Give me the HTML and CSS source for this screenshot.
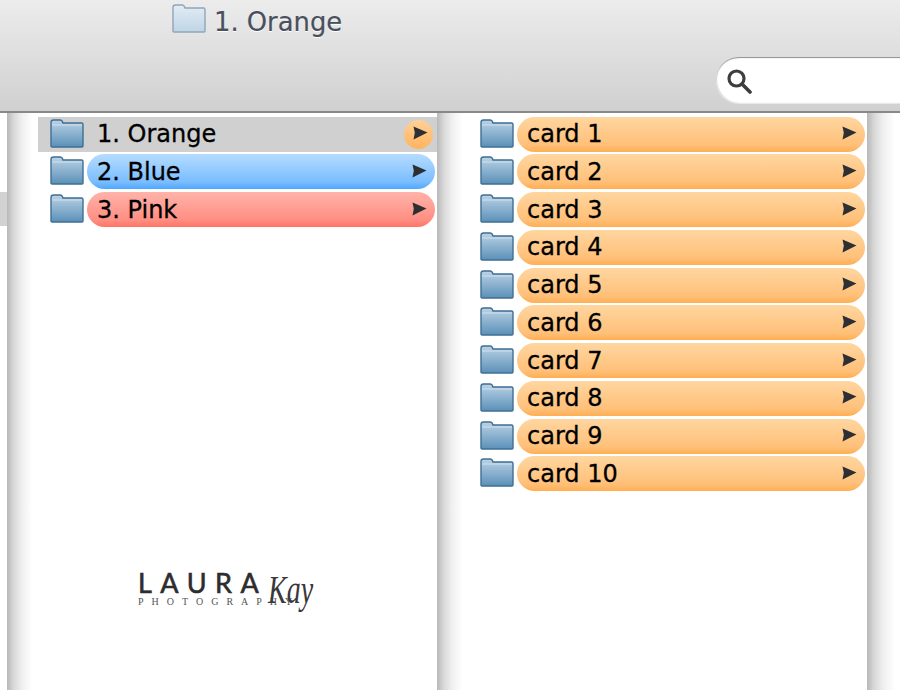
FILE: index.html
```html
<!DOCTYPE html>
<html lang="en">
<head>
    <meta charset="UTF-8">
    <meta name="viewport" content="width=device-width, initial-scale=1.0">
    <title>1. Orange</title>
    <link rel="stylesheet" href="styles.css">
</head>
<body>
    <svg class="defs" width="0" height="0">
        <defs>
            <linearGradient id="folderFill" x1="0" y1="0" x2="0" y2="1">
                <stop offset="0" stop-color="#bcd3e6"/>
                <stop offset="1" stop-color="#5b90b8"/>
            </linearGradient>
            <linearGradient id="folderPale" x1="0" y1="0" x2="0" y2="1">
                <stop offset="0" stop-color="#e2ecf4"/>
                <stop offset="1" stop-color="#bfd4e6"/>
            </linearGradient>
            <symbol id="folder" viewBox="0 0 34 30">
                <path d="M1 28V4.500C1 3 2 2 3.500 2H10C11.500 2 12.500 3 13 5H31.500C32.500 5 33 5.500 33 6.500V28C33 28.700 32.500 29 32 29H2C1.500 29 1 28.700 1 28Z" fill="url(#folderFill)" stroke="#3f6f93" stroke-width="1.400"/>
                <path d="M2 7H32" stroke="#e3eef6" stroke-width="1" opacity="0.700"/>
            </symbol>
            <symbol id="arrow" viewBox="0 0 15 14">
                <path d="M0.500 0.500L14.500 6.500L0.500 13.500L1.800 6.800Z" fill="#2d2f33"/>
            </symbol>
        </defs>
    </svg>

    <header class="toolbar">
        <div class="path-title">
            <svg class="title-folder" viewBox="0 0 34 30">
                <path d="M1 28V4.500C1 3 2 2 3.500 2H10C11.500 2 12.500 3 13 5H31.500C32.500 5 33 5.500 33 6.500V28C33 28.700 32.500 29 32 29H2C1.500 29 1 28.700 1 28Z" fill="url(#folderPale)" stroke="#8fa6b8" stroke-width="1.400"/>
            </svg>
            <span>1. Orange</span>
        </div>
        <div class="search">
            <svg class="search-icon" viewBox="0 0 26 26">
                <circle cx="10.500" cy="10.500" r="7.500" fill="none" stroke="#3e3e3e" stroke-width="3.200"/>
                <path d="M16 16L24 24" stroke="#3e3e3e" stroke-width="3.600" stroke-linecap="round"/>
            </svg>
        </div>
    </header>

    <main class="browser">
        <div class="gutter gutter-first">
            <div class="prev-column"><div class="prev-selection"></div></div>
            <div class="shade"></div>
        </div>

        <section class="column">
            <div class="row row-selected">
                <svg class="folder"><use href="#folder"/></svg>
                <div class="label">
                    <span>1. Orange</span>
                    <div class="dot"><svg class="arrow"><use href="#arrow"/></svg></div>
                </div>
            </div>
            <div class="row">
                <svg class="folder"><use href="#folder"/></svg>
                <div class="label pill blue"><span>2. Blue</span><svg class="arrow"><use href="#arrow"/></svg></div>
            </div>
            <div class="row">
                <svg class="folder"><use href="#folder"/></svg>
                <div class="label pill pink"><span>3. Pink</span><svg class="arrow"><use href="#arrow"/></svg></div>
            </div>
            <div class="logo">
                <div class="logo-name">LAURA</div>
                <div class="logo-sub">PHOTOGRAPHY</div>
                <div class="logo-script">Kay</div>
            </div>
        </section>

        <div class="gutter"><div class="shade"></div></div>

        <section class="column">
            <div class="row"><svg class="folder"><use href="#folder"/></svg><div class="label pill orange"><span>card 1</span><svg class="arrow"><use href="#arrow"/></svg></div></div>
            <div class="row"><svg class="folder"><use href="#folder"/></svg><div class="label pill orange"><span>card 2</span><svg class="arrow"><use href="#arrow"/></svg></div></div>
            <div class="row"><svg class="folder"><use href="#folder"/></svg><div class="label pill orange"><span>card 3</span><svg class="arrow"><use href="#arrow"/></svg></div></div>
            <div class="row"><svg class="folder"><use href="#folder"/></svg><div class="label pill orange"><span>card 4</span><svg class="arrow"><use href="#arrow"/></svg></div></div>
            <div class="row"><svg class="folder"><use href="#folder"/></svg><div class="label pill orange"><span>card 5</span><svg class="arrow"><use href="#arrow"/></svg></div></div>
            <div class="row"><svg class="folder"><use href="#folder"/></svg><div class="label pill orange"><span>card 6</span><svg class="arrow"><use href="#arrow"/></svg></div></div>
            <div class="row"><svg class="folder"><use href="#folder"/></svg><div class="label pill orange"><span>card 7</span><svg class="arrow"><use href="#arrow"/></svg></div></div>
            <div class="row"><svg class="folder"><use href="#folder"/></svg><div class="label pill orange"><span>card 8</span><svg class="arrow"><use href="#arrow"/></svg></div></div>
            <div class="row"><svg class="folder"><use href="#folder"/></svg><div class="label pill orange"><span>card 9</span><svg class="arrow"><use href="#arrow"/></svg></div></div>
            <div class="row"><svg class="folder"><use href="#folder"/></svg><div class="label pill orange"><span>card 10</span><svg class="arrow"><use href="#arrow"/></svg></div></div>
        </section>

        <div class="gutter gutter-last"><div class="shade"></div></div>
    </main>
</body>
</html>
```

FILE: styles.css
```css
html, body {
    margin: 0;
    padding: 0;
    height: 690px;
    overflow: hidden;
    background-color: #ffffff;
    font-family: "DejaVu Sans", Verdana, sans-serif;
}

.defs {
    display: block;
    height: 0;
}

/* Top bar */
.toolbar {
    display: flex;
    flex-direction: column;
    height: 111px;
    background: linear-gradient(#ececec, #d0d0d0);
    border-bottom: 2px solid #888888;
}

.path-title {
    display: flex;
    align-items: center;
    gap: 8px;
    margin-left: 172px;
    margin-top: 5px;
    font-size: 25.800px;
    line-height: 34px;
    color: #4a4f5e;
    text-shadow: 0 1px 0 #ffffff;
    -webkit-text-stroke: 0.2px #4a4f5e;
}

.title-folder {
    width: 34px;
    height: 30px;
    margin-top: -8px;
}

.search {
    align-self: flex-end;
    width: 184px;
    height: 46px;
    margin-top: 18px;
    box-sizing: border-box;
    padding: 11px 0 0 10px;
    background-color: #ffffff;
    border-radius: 23px 0 0 23px;
    box-shadow: inset 0 2px 1px -1px #8e8e8e, inset 1px 0 1px #d4d4d4, 0 1px 0 #e8e8e8;
}

.search-icon {
    display: block;
    width: 26px;
    height: 26px;
}

/* Column browser */
.browser {
    display: flex;
    height: 577px;
}

.gutter {
    display: flex;
    width: 30px;
    flex-shrink: 0;
}

.gutter-first {
    width: 37px;
}

.gutter-last {
    width: 33px;
}

.shade {
    flex: 1;
    background: linear-gradient(to right, #b8b8b8, #d8d8d8 22%, #f0f0f0 50%, #ffffff 85%);
}

.prev-column {
    width: 7px;
    background-color: #ffffff;
}

.prev-selection {
    height: 34px;
    margin-top: 79px;
    background-color: #d2d2d2;
}

.column {
    position: relative;
    width: 400px;
    flex-shrink: 0;
    padding-top: 3.600px;
    box-sizing: border-box;
    background-color: #ffffff;
}

.row {
    display: flex;
    align-items: center;
    height: 35px;
    margin-bottom: 2.750px;
    padding-left: 13px;
}

.row-selected {
    margin-left: 1px;
    padding-left: 12px;
    background-color: #d0d0d0;
}

.folder {
    width: 34px;
    height: 30px;
    flex-shrink: 0;
    margin-top: -3px;
}

.label {
    display: flex;
    flex: 1;
    align-items: center;
    justify-content: space-between;
    height: 35px;
    margin-left: 3px;
    margin-right: 2px;
    padding-left: 10px;
    padding-right: 8px;
    font-size: 24px;
    color: #000000;
    -webkit-text-stroke: 0.3px #000000;
    box-sizing: border-box;
}

.pill {
    border-radius: 17.500px;
}

.orange {
    background: linear-gradient(#ffd6a0, #ffc079 80%, #ffae52);
}

.blue {
    background: linear-gradient(#b5dcff, #7abdff 80%, #4fa7ff);
}

.pink {
    background: linear-gradient(#ffb3aa, #ff8e82 80%, #ff7465);
}

.arrow {
    width: 15px;
    height: 14px;
    flex-shrink: 0;
    margin-top: -2px;
}

.dot {
    display: flex;
    align-items: center;
    justify-content: center;
    width: 29px;
    height: 29px;
    margin-right: -6px;
    border-radius: 50%;
    background: linear-gradient(#ffd097, #ffb45e);
}

.dot .arrow {
    margin-left: 3px;
}

/* Watermark */
.logo {
    position: absolute;
    left: 101px;
    top: 458px;
    width: 180px;
    height: 50px;
    color: #2e2c2e;
}

.logo-name {
    font-family: "Lato", sans-serif;
    font-size: 27px;
    line-height: 24px;
    letter-spacing: 8.500px;
    -webkit-text-stroke: 0.6px #2e2c2e;
}

.logo-sub {
    margin-top: 2px;
    font-family: "Liberation Serif", serif;
    font-size: 10px;
    line-height: 9px;
    letter-spacing: 8px;
    color: #555555;
    white-space: nowrap;
}

.logo-script {
    position: absolute;
    left: 130px;
    top: -4px;
    font-family: "Liberation Serif", serif;
    font-style: italic;
    font-size: 40px;
    line-height: 46px;
    color: #3a383a;
    transform: scaleX(0.7);
    transform-origin: left top;
}
```
